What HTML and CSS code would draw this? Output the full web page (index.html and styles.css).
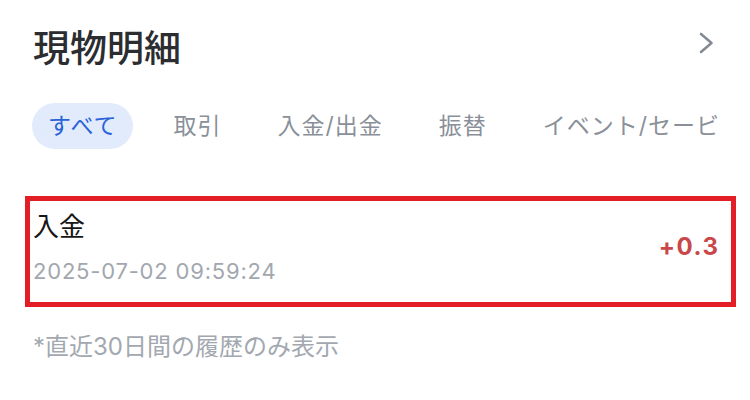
FILE: index.html
```html
<!DOCTYPE html>
<html lang="ja">
<head>
    <meta charset="UTF-8">
    <meta name="viewport" content="width=device-width, initial-scale=1.0">
    <title>現物明細</title>
    <link rel="stylesheet" href="styles.css">
</head>
<body>
    <div class="page">
        <div class="header">
            <h1 class="title">現物明細</h1>
            <svg class="chevron" width="20" height="24" viewBox="0 0 20 24">
                <polyline points="3,3 13.5,12 3,21" fill="none" stroke="#858b95" stroke-width="2.6" stroke-linecap="round" stroke-linejoin="round"/>
            </svg>
        </div>

        <div class="tabs">
            <span class="tab active">すべて</span>
            <span class="tab">取引</span>
            <span class="tab">入金/出金</span>
            <span class="tab">振替</span>
            <span class="tab">イベント/セービング</span>
        </div>

        <div class="record">
            <div class="record-info">
                <div class="record-type">入金</div>
                <div class="record-date">2025-07-02 09:59:24</div>
            </div>
            <div class="record-amount">+0.3</div>
        </div>

        <p class="note">*直近30日間の履歴のみ表示</p>
    </div>
</body>
</html>
```

FILE: styles.css
```css
body {
    margin: 0;
    background-color: #fff;
    font-family: Inter, "Noto Sans CJK JP", sans-serif;
}
.page {
    padding: 24px 32px 0 33px;
}
.header {
    display: flex;
    justify-content: space-between;
    align-items: center;
    height: 44px;
}
.title {
    margin: 0;
    font-size: 37px;
    line-height: 44px;
    font-weight: 500;
    color: #2b2d31;
    font-family: "Noto Sans CJK JP", sans-serif;
}
.chevron {
    margin-top: -6px;
}
.tabs {
    display: flex;
    gap: 24px;
    margin-top: 35px;
    margin-left: -1px;
    overflow: hidden;
    white-space: nowrap;
}
.tab {
    flex-shrink: 0;
    padding: 0 16px;
    height: 46px;
    line-height: 46px;
    border-radius: 23px;
    font-size: 23px;
    letter-spacing: 1px;
    color: #8a9099;
}
.tab.active {
    background-color: #e2ebfb;
    color: #2962d9;
}
.record {
    position: relative;
    display: flex;
    justify-content: space-between;
    align-items: center;
    margin-top: 47px;
    padding: 14px 0 21px 0;
}
.record::after {
    content: "";
    position: absolute;
    top: 0;
    bottom: 0;
    left: -8px;
    right: -18px;
    border: 5px solid #e31e27;
}
.record-type {
    font-size: 26px;
    line-height: 34px;
    color: #161616;
}
.record-date {
    margin-top: 12px;
    font-size: 22px;
    line-height: 30px;
    color: #a2a7af;
    letter-spacing: 0.8px;
}
.record-amount {
    margin-top: -4px;
    margin-right: -1.5px;
    font-size: 24px;
    font-weight: 700;
    letter-spacing: 1.5px;
    color: #c9474a;
}
.note {
    margin: 25px 0 0 0;
    font-size: 24px;
    line-height: 30px;
    color: #a3a8b0;
}
```
